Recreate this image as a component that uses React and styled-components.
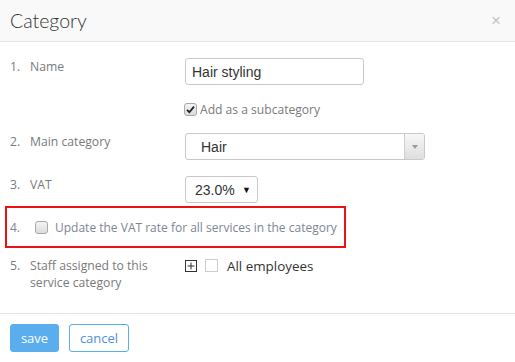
import React from "react";
import styled, { createGlobalStyle } from "styled-components";

const Global = createGlobalStyle`
  html, body { margin: 0; padding: 0; background: #fff; }
  body { font-family: "Open Sans", "Liberation Sans", sans-serif; }
  * { box-sizing: border-box; }
`;

const Modal = styled.div`
  width: 515px;
  height: 362px;
  background: #fff;
  display: flex;
  flex-direction: column;
  overflow: hidden;
`;

const Header = styled.div`
  height: 43px;
  background: #f9f9f9;
  border-bottom: 1px solid #e5e5e5;
  display: flex;
  align-items: center;
  justify-content: space-between;
  padding: 0 14px 1px 10px;
`;

const Title = styled.h3`
  margin: 0;
  font-family: Lato, "Open Sans", sans-serif;
  font-weight: 300;
  font-size: 19.5px;
  color: #333;
`;

const Close = styled.span`
  font-family: "Liberation Sans", Arial, sans-serif;
  font-size: 17px;
  color: #c4c4c4;
  line-height: 1;
`;

const Body = styled.div`
  padding: 16px 0 22px 0;
  display: flex;
  flex-direction: column;
`;

const Row = styled.div`
  display: grid;
  grid-template-columns: 175px 1fr;
  align-items: start;
  padding-left: 10px;
  margin-top: ${(p) => p.$gap || 0}px;
`;

const Label = styled.div`
  display: flex;
  font-size: 12.2px;
  line-height: 17px;
  color: #7a7a7a;
`;

const Num = styled.span`
  width: 20px;
  flex: none;
`;

const TextInput = styled.div`
  width: 179px;
  height: 27px;
  border: 1px solid #c9c9c9;
  border-radius: 3px;
  padding-left: 6px;
  display: flex;
  align-items: center;
  font-family: "Liberation Sans", Arial, sans-serif;
  font-size: 14px;
  color: #333;
`;

const CheckLine = styled.label`
  display: flex;
  align-items: center;
  gap: 3px;
  height: 20px;
  font-size: 12.1px;
  color: #7a7a7a;
  margin-left: -1px;
`;

const CheckBox = styled.span`
  width: 13px;
  height: 13px;
  flex: none;
  display: inline-flex;
  align-items: center;
  justify-content: center;
  border: 1px solid ${(p) => (p.$square ? "#ccc" : "#a8a8a8")};
  border-radius: ${(p) => (p.$square ? 0 : 3)}px;
  background: ${(p) =>
    p.$square ? "#fff" : "linear-gradient(#f4f4f4, #dcdcdc)"};
`;

const Select = styled.div`
  width: ${(p) => p.$w}px;
  height: 27px;
  border: 1px solid #c9c9c9;
  border-radius: 3px;
  display: flex;
  align-items: center;
  font-family: "Liberation Sans", Arial, sans-serif;
  font-size: 14px;
  color: #333;
  overflow: hidden;
`;

const SelectText = styled.span`
  flex: 1;
  padding-left: ${(p) => p.$pl}px;
`;

const ArrowPane = styled.span`
  width: 20px;
  align-self: stretch;
  border-left: 1px solid #cfcfcf;
  background: linear-gradient(#f7f7f7, #dedede);
  display: flex;
  align-items: center;
  justify-content: center;
`;

const NativeArrow = styled.span`
  font-size: 9px;
  color: #111;
  padding-right: 6px;
`;

const Highlight = styled.div`
  margin: 3px 0 0 5px;
  width: 341px;
  height: 42px;
  border: 2px solid #ee1111;
  display: flex;
  align-items: center;
  padding-left: 3px;
  font-size: 12px;
  color: #7d8592;
`;

const HighlightNum = styled.span`
  width: 25px;
  flex: none;
`;

const HighlightText = styled.span`
  margin-left: 7px;
  white-space: nowrap;
`;

const StaffControls = styled.div`
  display: flex;
  align-items: center;
  gap: 8px;
  height: 17px;
`;

const PlusBox = styled.span`
  width: 12px;
  height: 12px;
  border: 1px solid #333;
  display: inline-flex;
`;

const AllLabel = styled.span`
  font-size: 13.4px;
  color: #333;
  margin-left: 1px;
`;

const Footer = styled.div`
  border-top: 1px solid #e5e5e5;
  padding: 10px 10px;
  display: flex;
  gap: 10px;
`;

const Button = styled.button`
  height: 28px;
  width: ${(p) => p.$w}px;
  padding: 0;
  border-radius: 3px;
  border: 1px solid #5aaeee;
  background: ${(p) => (p.$primary ? "#5aaeee" : "#fff")};
  color: ${(p) => (p.$primary ? "#fff" : "#4d8fe0")};
  font-family: "Open Sans", sans-serif;
  font-size: 13px;
  line-height: 1;
`;

export default function App() {
  return (
    <Modal>
      <Global />
      <Header>
        <Title>Category</Title>
        <Close>×</Close>
      </Header>
      <Body>
        <Row>
          <Label>
            <Num>1.</Num>Name
          </Label>
          <TextInput>Hair styling</TextInput>
        </Row>
        <Row $gap={14}>
          <span />
          <CheckLine>
            <CheckBox>
              <svg width="9" height="9" viewBox="0 0 9 9">
                <path d="M1 4.8 L3.4 7.2 L8 1.6" fill="none" stroke="#222" strokeWidth="1.8" />
              </svg>
            </CheckBox>
            Add as a subcategory
          </CheckLine>
        </Row>
        <Row $gap={14}>
          <Label>
            <Num>2.</Num>Main category
          </Label>
          <Select $w={240}>
            <SelectText $pl={15}>Hair</SelectText>
            <ArrowPane>
              <svg width="6" height="4" viewBox="0 0 6 4">
                <path d="M0 0 H6 L3 4 Z" fill="#9a9a9a" />
              </svg>
            </ArrowPane>
          </Select>
        </Row>
        <Row $gap={16}>
          <Label>
            <Num>3.</Num>VAT
          </Label>
          <Select $w={73}>
            <SelectText $pl={9}>23.0%</SelectText>
            <NativeArrow>▼</NativeArrow>
          </Select>
        </Row>
        <Highlight>
          <HighlightNum>4.</HighlightNum>
          <CheckBox />
          <HighlightText>Update the VAT rate for all services in the category</HighlightText>
        </Highlight>
        <Row $gap={9}>
          <Label>
            <Num>5.</Num>
            <span>
              Staff assigned to this
              <br />
              service category
            </span>
          </Label>
          <StaffControls>
            <PlusBox>
              <svg width="10" height="10" viewBox="0 0 10 10">
                <path d="M5 1.5 V8.5 M1.5 5 H8.5" stroke="#333" strokeWidth="1" />
              </svg>
            </PlusBox>
            <CheckBox $square />
            <AllLabel>All employees</AllLabel>
          </StaffControls>
        </Row>
      </Body>
      <Footer>
        <Button $primary $w={49}>save</Button>
        <Button $w={60}>cancel</Button>
      </Footer>
    </Modal>
  );
}
